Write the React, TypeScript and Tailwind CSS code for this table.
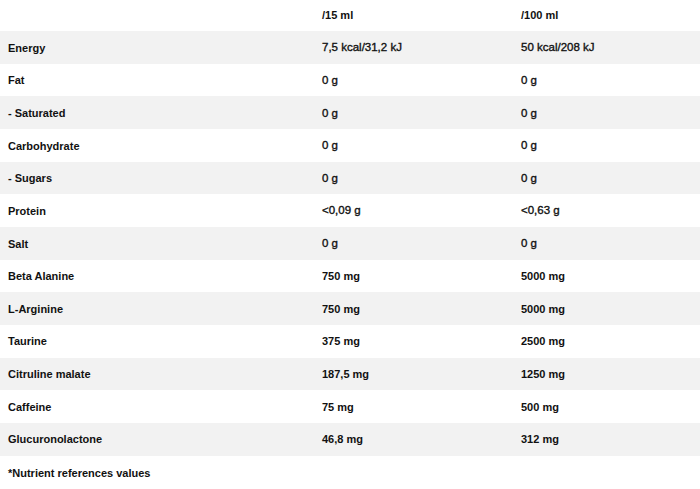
import React from "react";

type Row = { label: string; a: string; b: string; bold?: boolean };

const rows: Row[] = [
  { label: "Energy", a: "7,5 kcal/31,2 kJ", b: "50 kcal/208 kJ" },
  { label: "Fat", a: "0 g", b: "0 g" },
  { label: "- Saturated", a: "0 g", b: "0 g" },
  { label: "Carbohydrate", a: "0 g", b: "0 g" },
  { label: "- Sugars", a: "0 g", b: "0 g" },
  { label: "Protein", a: "<0,09 g", b: "<0,63 g" },
  { label: "Salt", a: "0 g", b: "0 g" },
  { label: "Beta Alanine", a: "750 mg", b: "5000 mg", bold: true },
  { label: "L-Arginine", a: "750 mg", b: "5000 mg", bold: true },
  { label: "Taurine", a: "375 mg", b: "2500 mg", bold: true },
  { label: "Citruline malate", a: "187,5 mg", b: "1250 mg", bold: true },
  { label: "Caffeine", a: "75 mg", b: "500 mg", bold: true },
  { label: "Glucuronolactone", a: "46,8 mg", b: "312 mg", bold: true },
];

export default function App() {
  return (
    <div
      className="w-[700px] h-[489px] bg-white text-[#111] text-[11px]"
      style={{ fontFamily: "'Liberation Sans', Arial, sans-serif" }}
    >
      <div className="grid grid-cols-[314px_199px_1fr] h-[31px] items-center font-bold">
        <div className="px-2"></div>
        <div className="px-2">/15 ml</div>
        <div className="px-2">/100 ml</div>
      </div>
      {rows.map((r, i) => (
        <div
          key={r.label}
          className={
            "grid grid-cols-[314px_199px_1fr] h-[32.67px] items-center pt-[1px] " +
            (i % 2 === 0 ? "bg-[#f2f2f2]" : "bg-white")
          }
        >
          <div className="px-2 font-bold">{r.label}</div>
          <div
            className={
              "px-2 " +
              (r.bold ? "font-bold" : "text-[11.5px] [-webkit-text-stroke:0.35px_#111]")
            }
          >
            {r.a}
          </div>
          <div
            className={
              "px-2 " +
              (r.bold ? "font-bold" : "text-[11.5px] [-webkit-text-stroke:0.35px_#111]")
            }
          >
            {r.b}
          </div>
        </div>
      ))}
      <div className="px-2 pt-[9px] font-bold">*Nutrient references values</div>
    </div>
  );
}
